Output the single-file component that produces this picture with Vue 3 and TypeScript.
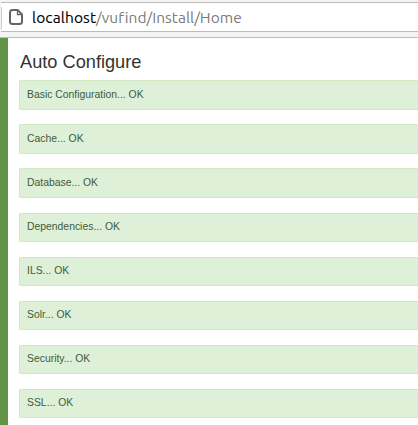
<script setup lang="ts">
interface Check {
  name: string
  status: string
}

const checks: Check[] = [
  'Basic Configuration',
  'Cache',
  'Database',
  'Dependencies',
  'ILS',
  'Solr',
  'Security',
  'SSL',
].map((name) => ({ name, status: 'OK' }))
</script>

<template>
  <div class="window">
    <header class="toolbar">
      <div class="address">
        <svg class="page-icon" width="14" height="16" viewBox="0 0 14 16" aria-hidden="true">
          <path
            d="M3.5 1H8.6L13 5.4V12.5Q13 15 10.5 15H3.5Q1 15 1 12.5V3.5Q1 1 3.5 1Z"
            fill="#fff"
            stroke="#666"
            stroke-width="2"
            stroke-linejoin="round"
          />
          <path d="M8.5 1.5V5.5H12.5" fill="none" stroke="#666" stroke-width="1.3" />
        </svg>
        <div class="url"><span class="host">localhost</span><span class="path">/vufind/Install/Home</span></div>
      </div>
    </header>
    <main class="page">
      <h2 class="title">Auto Configure</h2>
      <div class="checks">
        <div v-for="check in checks" :key="check.name" class="alert">
          <span class="message">{{ check.name }}... {{ check.status }}</span>
        </div>
      </div>
    </main>
  </div>
</template>

<style>
body {
  margin: 0;
  overflow: hidden;
}
</style>

<style scoped>
.window {
  box-sizing: border-box;
  height: 425px;
  overflow: hidden;
  background: #fff;
}

.toolbar {
  box-sizing: border-box;
  height: 38px;
  padding-top: 2px;
  background: #f4f4f4;
  border-bottom: 1px solid #bbb;
}

.address {
  box-sizing: border-box;
  display: flex;
  align-items: center;
  height: 30px;
  margin-left: 1px;
  padding-left: 8px;
  background: linear-gradient(#ccc, #ccc) 0 4px / 1px 22px no-repeat #fff;
  border-top: 1px solid #bbb;
  border-bottom: 1px solid #bbb;
}

.page-icon {
  flex: none;
  margin-right: 9px;
}

.url {
  display: flex;
  padding-top: 2px;
  font: 15.5px/20px Ubuntu, 'Noto Sans', sans-serif;
  white-space: nowrap;
}

.host {
  width: 64px;
  color: #000;
  letter-spacing: 0.12px;
  -webkit-text-stroke: 0.1px #000;
}

.path {
  color: #7b7b7b;
  letter-spacing: 0.03px;
}

.page {
  box-sizing: border-box;
  height: 387px;
  padding: 14px 0 0 11px;
  border-left: 8px solid #629447;
}

.title {
  width: max-content;
  margin: 0 0 8.2px 1px;
  color: #333;
  font: 400 19px/20px 'Liberation Sans', Arial, sans-serif;
  transform: scaleX(0.958);
  transform-origin: 0 0;
}

.checks {
  display: grid;
  gap: 14.8px;
}

.alert {
  box-sizing: border-box;
  height: 29.33px;
  padding: 0 7px;
  color: #3d5c3c;
  background: #dff0d8;
  border: 1px solid #d0e9c0;
  border-right: 0;
  border-radius: 2px 0 0 2px;
  font: 11px/26px 'Liberation Sans', Arial, sans-serif;
}

.message {
  display: block;
  width: max-content;
  margin-top: -0.67px;
  transform: scaleX(0.944);
  transform-origin: 0 0;
}
</style>
